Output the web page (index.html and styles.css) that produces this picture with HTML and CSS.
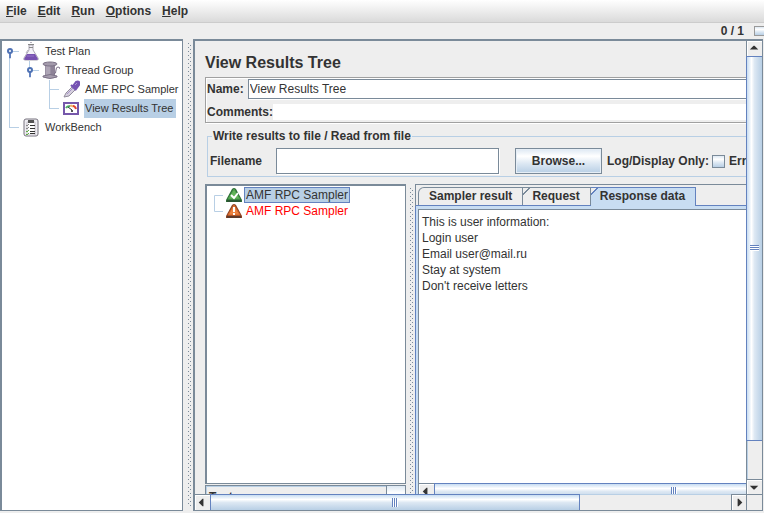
FILE: index.html
```html
<!DOCTYPE html>
<html lang="en">
<head>
<meta charset="utf-8">
<title>Test Plan</title>
<link rel="stylesheet" href="styles.css">
</head>
<body>
<nav class="menubar">
  <button type="button"><u>F</u>ile</button>
  <button type="button"><u>E</u>dit</button>
  <button type="button"><u>R</u>un</button>
  <button type="button"><u>O</u>ptions</button>
  <button type="button"><u>H</u>elp</button>
</nav>
<div class="status"><span>0 / 1</span><span class="lamp"></span></div>
<main class="workspace">
  <aside class="sidebar">
    <ul class="tree">
      <li>
        <div class="node"><svg class="knob" viewBox="0 0 20 19"><path d="M10 9.500h7" stroke="#b8cfe5"/><path d="M7.500 11v5h1v-5" fill="none" stroke="#6382bf"/><circle cx="8" cy="9" r="2" fill="#fff" stroke="#4f72b5" stroke-width="2"/></svg>
          <svg class="icon" viewBox="0 0 18 19"><path d="M7 3v5L2 16q-1 2 1 2h12q2 0 1-2L11 8V3z" fill="#f4f2f8" stroke="#aaa6b3"/><path d="M5 12h8l3 5q0 1-2 1H4q-2 0-2-1z" fill="#7751b0"/><path d="M6 2.500h6M7 5.500h4" stroke="#888"/><path d="M8 .5h2M4 11l2-3" stroke="#b7b3bd"/><path d="M5 14h7" stroke="#9474c8"/></svg>
          <span class="label">Test Plan</span></div>
        <ul>
          <li>
            <div class="node"><svg class="knob" viewBox="0 0 20 19"><path d="M10 9.500h7" stroke="#b8cfe5"/><path d="M7.500 11v5h1v-5" fill="none" stroke="#6382bf"/><circle cx="8" cy="9" r="2" fill="#fff" stroke="#4f72b5" stroke-width="2"/></svg>
              <svg class="icon" viewBox="0 0 18 19"><path d="M3 4h10v11H3z" fill="#9a90a3"/><path d="M5 5v10M7 5v10" stroke="#c2bac8"/><path d="M10 5v10M12 5v10" stroke="#81778c"/><ellipse cx="8" cy="3" rx="7" ry="2" fill="#a39aab" stroke="#7c7287"/><path d="M1 15q7-3 14 0v1q-7 3-14 0z" fill="#a69dae" stroke="#7c7287"/><path d="M12 13q2 0 2-4 0-3 2-3t2 2" fill="none" stroke="#796c86"/></svg>
              <span class="label">Thread Group</span></div>
            <ul>
              <li><div class="node leaf"><svg class="icon" viewBox="0 0 18 19"><path d="M2 17l2-4 7-7 3 3-7 7z" fill="#d5cfde" stroke="#928c9c"/><path d="M5 14l6-6" stroke="#a795c8"/><path d="M9 5l5 5M11 6l3-4q2-1 3 0t0 3l-3 4z" fill="#7552b2" stroke="#7552b2" stroke-width="2"/><path d="M13 5l2-2" stroke="#aa93d5"/></svg>
                <span class="label">AMF RPC Sampler</span></div></li>
              <li><div class="node leaf"><svg class="icon" viewBox="0 0 18 19"><path d="M2 4h14v11H2z" fill="#fff" stroke="#7658ab" stroke-width="2"/><path d="M4 9q1-2 4-2" fill="none" stroke="#4aac64" stroke-width="2"/><path d="M8 7q2-1 3 1" fill="none" stroke="#efb064" stroke-width="2"/><path d="M11 7q2 0 3 3" fill="none" stroke="#e5452e" stroke-width="2"/><path d="M6 8l4 3" stroke="#333"/><circle cx="10" cy="12" r="1" fill="#222"/></svg>
                <span class="label selected">View Results Tree</span></div></li>
            </ul>
          </li>
        </ul>
      </li>
      <li><div class="node leaf"><svg class="icon" viewBox="0 0 18 19"><rect x="2" y="1" width="14" height="17" rx="2" fill="#eeedf1" stroke="#77727f"/><path d="M5 4h8v13H5z" fill="#fff" stroke="#c2bdc8"/><path d="M6 2h6v3H6z" fill="#555"/><path d="M8 7.500h5M8 10.500h5M8 13.500h5M8 15.500h5" stroke="#333"/><path d="M4 7l1 1 2-2M4 10l1 1 2-2" fill="none" stroke="#888"/><path d="M4 13l1 1 2-2M4 16l1 1 2-2" fill="none" stroke="#60ad45"/></svg>
        <span class="label">WorkBench</span></div></li>
    </ul>
  </aside>
  <div class="divider"></div>
  <section class="pane">
    <div class="viewport">
      <div class="content">
        <h1>View Results Tree</h1>
        <div class="naming">
          <div class="field"><label for="name">Name:</label><input id="name" class="boxed" type="text" value="View Results Tree"></div>
          <div class="field"><label for="comments">Comments:</label><input id="comments" type="text"></div>
        </div>
        <fieldset class="file">
          <legend>Write results to file / Read from file</legend>
          <div class="filerow">
            <label class="filelabel" for="filename">Filename</label>
            <input id="filename" class="boxed" type="text">
            <button type="button" class="browse">Browse...</button>
            <span class="only">Log/Display Only:</span>
            <input id="errors" type="checkbox"><label for="errors">Errors</label>
          </div>
        </fieldset>
        <div class="results">
          <div class="samples">
            <ul class="list">
              <li><svg class="elbow" viewBox="0 0 19 16"><path d="M16 8.500H7.500V16" fill="none" stroke="#b8cfe5"/></svg><svg class="mark" viewBox="0 0 16 16"><path d="M8 1q1 0 2 1l6 11v2H0v-2L6 2q1-1 2-1z" fill="#2f6f38"/><path d="M8 2l6 10H2z" fill="#62b35a" stroke="#479b48" stroke-linejoin="round"/><path d="M1 13h14v2H1z" fill="#2b5632"/><path d="M5 8l3 3 4-5" fill="none" stroke="#fff" stroke-width="2"/></svg><span class="sample selected">AMF RPC Sampler</span></li>
              <li><svg class="elbow" viewBox="0 0 19 16"><path d="M7.500 0v8.500H16" fill="none" stroke="#b8cfe5"/></svg><svg class="mark" viewBox="0 0 16 16"><path d="M8 1q1 0 2 1l6 11v2H0v-2L6 2q1-1 2-1z" fill="#8f4524"/><path d="M8 2l6 10H2z" fill="#ec8240" stroke="#d4642a" stroke-linejoin="round"/><path d="M1 13h14v2H1z" fill="#5f3a2b"/><path d="M8 4v5M8 10v2" stroke="#fff" stroke-width="2"/></svg><span class="sample failed">AMF RPC Sampler</span></li>
            </ul>
            <div class="combo"><span>Text</span><button type="button" aria-label="Choose renderer"></button></div>
          </div>
          <div class="divider narrow"></div>
          <div class="tabs">
            <div class="strip">
              <button type="button">Sampler result</button>
              <button type="button">Request</button>
              <button type="button" class="current">Response data</button>
            </div>
            <div class="tabbody">
              <div class="response">
                <p>This is user information:</p>
                <p>Login user</p>
                <p>Email user@mail.ru</p>
                <p>Stay at system</p>
                <p>Don't receive letters</p>
              </div>
              <div class="hbar inner"><button type="button" class="arrow" aria-label="Scroll left"><svg viewBox="0 0 16 16"><path d="M4 8l4-4h1v8H8z"/></svg></button><div class="track"><div class="thumb"><i></i></div></div></div>
            </div>
          </div>
        </div>
      </div>
    </div>
    <div class="vbar"><button type="button" class="arrow" aria-label="Scroll up"><svg viewBox="0 0 16 16"><path d="M3 9l4-4h1l4 4z"/></svg></button><div class="track"><div class="thumb"><i></i></div></div><button type="button" class="arrow" aria-label="Scroll down"><svg viewBox="0 0 16 16"><path d="M3 6h9l-4 4H7z"/></svg></button></div>
    <div class="hbar"><button type="button" class="arrow" aria-label="Scroll left"><svg viewBox="0 0 16 16"><path d="M4 8l4-4h1v8H8z"/></svg></button><div class="track"><div class="thumb"><i></i></div></div><button type="button" class="arrow" aria-label="Scroll right"><svg viewBox="0 0 16 16"><path d="M6 4h1l4 4-4 4H6z"/></svg></button></div>
    <div class="corner"></div>
  </section>
</main>
</body>
</html>
```
FILE: styles.css
```css
:root {
  --edge: #7a8a99;
  --face: #eee;
  --pale: #b8cfe5;
  --blue: #6382bf;
  --text: #333;
  --gloss: linear-gradient(#dde8f3, #fff 30%, #dde8f3 60%, #b8cfe5);
}
* { box-sizing: border-box; }
body {
  margin: 0;
  height: 100vh;
  display: flex;
  flex-direction: column;
  overflow: hidden;
  background: var(--face);
  color: var(--text);
  font: bold 12px/16px "Liberation Sans", Arial, sans-serif;
}
button, input { font: inherit; color: inherit; margin: 0; }
button { padding: 0; border: 0; background: none; }
ul { list-style: none; margin: 0; padding: 0; }
p { margin: 0; }
svg { display: block; flex: none; }

.menubar {
  display: flex;
  gap: 11px;
  flex: none;
  height: 23px;
  padding: 0 6px;
  border-bottom: 1px solid #ccc;
  background: linear-gradient(#fff, #dadada);
}
.status {
  display: flex;
  justify-content: flex-end;
  align-items: center;
  gap: 10px;
  flex: none;
  height: 16px;
}
.lamp {
  width: 10px;
  height: 10px;
  border: solid #999;
  border-width: 1px 0 1px 1px;
  background: var(--gloss);
}

.workspace {
  flex: 1;
  min-height: 0;
  display: grid;
  grid-template-columns: 184px 9px 1fr;
  padding: 0 1px 2px 0;
}
.sidebar {
  border: 1px solid var(--edge);
  border-width: 2px 1px 1px 2px;
  margin-right: 1px;
  background: #fff;
  overflow: hidden;
  font-weight: normal;
  font-size: 11px;
}
.tree { padding-top: 1px; }
.tree ul { padding-left: 20px; }
.tree li { position: relative; }
.tree li::before {
  content: "";
  position: absolute;
  left: 7px;
  top: 0;
  width: 1px;
  height: 10px;
  background: var(--pale);
}
.tree li:not(:last-child)::before { height: 100%; }
.tree > li:first-child::before { top: 10px; height: calc(100% - 10px); }
.node { position: relative; display: flex; align-items: center; height: 19px; }
.knob { width: 20px; height: 19px; }
.leaf { padding-left: 20px; }
.leaf::before {
  content: "";
  position: absolute;
  left: 7px;
  top: 9px;
  width: 10px;
  height: 1px;
  background: var(--pale);
}
.icon { width: 18px; height: 19px; margin-right: 4px; }
.label { padding: 0 3px 0 1px; line-height: 19px; white-space: nowrap; }
.selected { background: var(--pale); }

.divider {
  padding: 4px 2px 4px 4px;
  background:
    conic-gradient(from 270deg at 1px 1px, var(--edge) 90deg, transparent 0) 0 0 / 4px 4px content-box content-box,
    conic-gradient(from 270deg at 1px 1px, var(--edge) 90deg, transparent 0) 2px 2px / 4px 4px content-box content-box;
}

.pane {
  min-width: 0;
  min-height: 0;
  display: grid;
  grid-template: minmax(0, 1fr) 16px / minmax(0, 1fr) 16px;
  border: 1px solid var(--edge);
  border-width: 2px 1px 1px 2px;
}
.viewport { overflow: hidden; }
.content {
  display: flex;
  flex-direction: column;
  width: 141%;
  height: 110%;
  padding: 10px;
}
h1 { margin: 0 0 3px; font-size: 16px; line-height: 23px; }
.naming { flex: none; border: 1px solid #a0a0a0; box-shadow: inset 1px 1px #fff, 1px 1px #fff; padding: 1px 1px 0; }
.field { display: flex; align-items: center; height: 20px; }
.field + .field { margin-top: 3px; }
.field input { flex: 1; height: 16px; padding: 0 1px; border: 0; background: #fff; font-weight: normal; font-size: 12px; }
.field .boxed { height: 20px; margin-left: 4px; }
input.boxed { border: 1px solid var(--edge); box-shadow: 1px 1px #fff; }
.file {
  flex: none;
  min-width: 0;
  margin: 5px 0 0 2px;
  padding: 4px 2px 2px;
  border: 1px solid var(--pale);
}
legend { margin-left: 2px; padding: 0 1px; }
.filerow { display: flex; align-items: center; }
.filelabel { width: 66px; }
.filerow .boxed { width: 223px; height: 26px; margin-right: 16px; background: #fff; }
.browse { width: 87px; height: 26px; border: 1px solid var(--edge); box-shadow: inset 0 0 0 1px #e6eef6; background: var(--gloss); }
.only { margin: 0 3px 0 5px; }
input[type="checkbox"] {
  appearance: none;
  width: 13px;
  height: 13px;
  margin-right: 4px;
  border: 1px solid var(--edge);
  background: var(--gloss);
}

.results { flex: 1; min-height: 0; display: grid; grid-template-columns: 202px 8px 1fr; margin-top: 7px; }
.samples { display: flex; flex-direction: column; }
.list {
  height: 300px;
  margin-right: 1px;
  border: 1px solid var(--edge);
  border-width: 2px 1px 1px 2px;
  padding-top: 1px;
  background: #fff;
  font-weight: normal;
}
.list li { display: flex; align-items: center; height: 16px; }
.elbow { width: 19px; height: 16px; }
.mark { width: 16px; height: 16px; margin-right: 2px; }
.sample { padding: 0 1px; border: 1px solid transparent; line-height: 14px; }
.sample.selected { border-color: var(--blue); }
.failed { color: #f00; }
.combo {
  display: flex;
  justify-content: space-between;
  height: 25px;
  margin: 1px 1px 0 0;
  border: 1px solid var(--edge);
  box-shadow: inset 1px 1px var(--pale);
}
.combo span { padding: 3px; line-height: 16px; }
.combo button { width: 19px; border-left: 1px solid var(--edge); background: var(--gloss); }
.divider.narrow { padding: 4px 1px 0 3px; }
.tabs { min-width: 0; display: flex; flex-direction: column; border: 1px solid var(--edge); border-bottom: 0; }
.strip { display: flex; height: 21px; padding: 2px 0 0 2px; background: linear-gradient(var(--blue), var(--blue)) bottom / 100% 1px no-repeat; }
.strip button {
  height: 18px;
  padding: 0 10px 0 9px;
  border: 1px solid var(--edge);
  border-width: 1px 1px 0 0;
  line-height: 17px;
  background: linear-gradient(135deg, transparent 4px, var(--edge) 4px, var(--edge) 5px, var(--face) 5px);
}
.strip button:first-child { padding-left: 10px; border-left: 1px solid var(--edge); border-top-left-radius: 6px; background: var(--face); }
.strip .current {
  height: 20px;
  padding-bottom: 2px;
  border-color: var(--blue);
  background: linear-gradient(135deg, var(--face) 4px, var(--blue) 4px, var(--blue) 5px, #c8ddf2 5px);
}
.tabbody {
  flex: 1;
  display: flex;
  flex-direction: column;
  border: solid #c8ddf2;
  border-width: 3px 0 0 2px;
  box-shadow: -1px 0 var(--blue);
}
.response {
  height: 274px;
  padding: 4px 3px;
  border: 1px solid var(--edge);
  border-bottom: 0;
  background: #fff;
  font-weight: normal;
}

.vbar { display: flex; flex-direction: column; border-left: 1px solid var(--edge); }
.hbar { display: flex; height: 16px; border-top: 1px solid var(--edge); }
.arrow { flex: none; width: 15px; height: 15px; box-shadow: inset 1px 1px #fff; }
.arrow svg { width: 15px; height: 15px; fill: var(--text); }
.track { flex: 1; min-width: 0; min-height: 0; box-shadow: inset 1px 1px var(--pale); }
.thumb { display: flex; align-items: center; justify-content: center; border: 1px solid var(--blue); }
.vbar .thumb { height: 91%; margin-left: -1px; border-right: 0; background: linear-gradient(90deg, #c8ddf2, #fff 30%, #dde8f3 50%, #b8cfe5); }
.hbar .thumb { width: 71%; height: 100%; border-bottom: 0; background: linear-gradient(#c8ddf2, #fff 30%, #dde8f3 50%, #b8cfe5); }
.hbar .track { margin-top: -1px; }
.vbar .track + .arrow { border-top: 1px solid var(--edge); }
.hbar .track + .arrow { border-left: 1px solid var(--edge); }
.vbar i { width: 9px; height: 6px; background: repeating-linear-gradient(var(--blue) 0 1px, #fff 1px 2px); }
.hbar i { width: 6px; height: 9px; background: repeating-linear-gradient(90deg, var(--blue) 0 1px, #fff 1px 2px); }
.inner { border-left: 1px solid var(--edge); }
.inner .thumb { width: 91%; }
.corner { border: 1px solid var(--edge); border-width: 1px 0 0 1px; }
```
